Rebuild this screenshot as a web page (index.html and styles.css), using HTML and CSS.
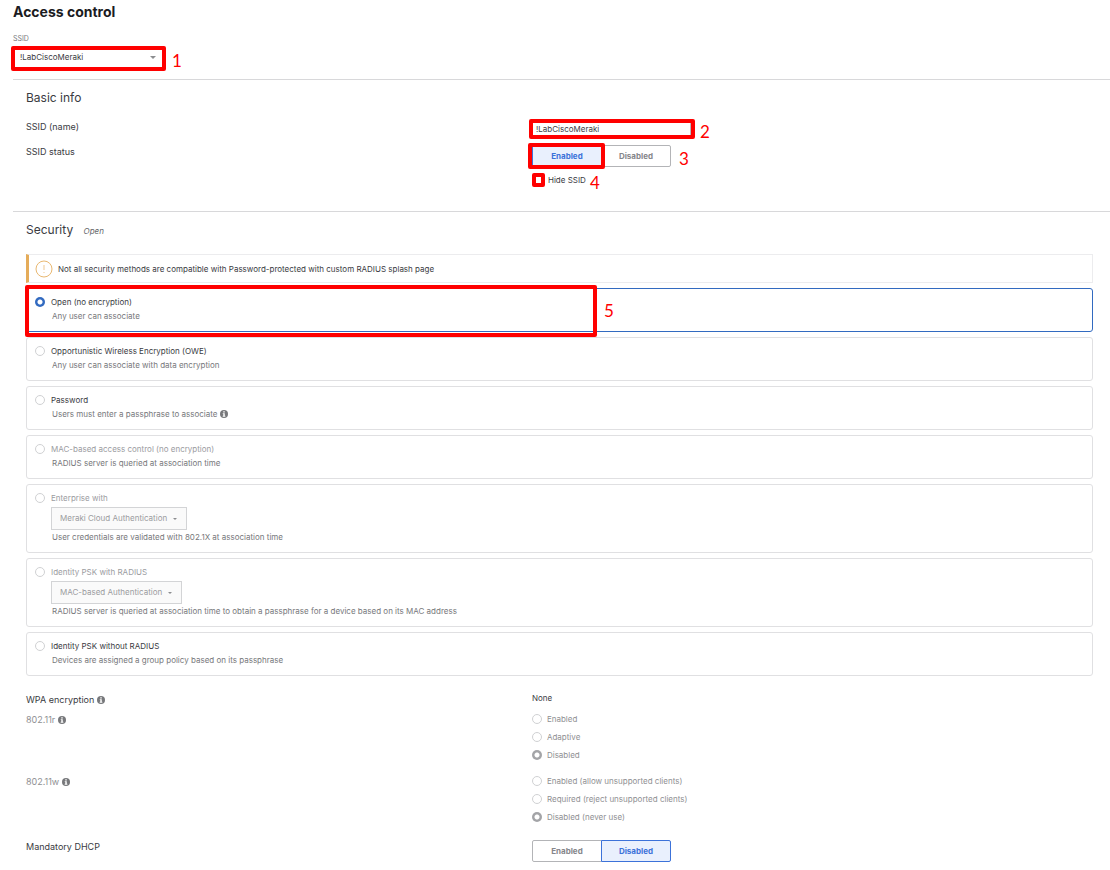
FILE: index.html
```html
<!DOCTYPE html>
<html lang="en">
  <head>
    <title>Access control</title>
    <meta charset="utf-8">
    <link rel="stylesheet" href="styles.css">
  </head>
  <body>
  <svg width="0" height="0" class="defs">
    <symbol id="info" viewBox="0 0 16 16">
      <circle cx="8" cy="8" r="8" fill="#77787b"/>
      <path d="M6.5 2.6h3v2.4h-3zM5.5 6.4h4v5h1.2v1.9H5.4v-1.9h1.2V8.2H5.5z" fill="#fff"/>
    </symbol>
  </svg>

  <header>
    <h1>Access control</h1>
    <label class="caption" for="ssid">SSID</label>
    <div class="ssid-picker">
      <select id="ssid"><option>!LabCiscoMeraki</option></select>
      <span class="mark mark-ssid"></span><span class="step step-ssid">1</span>
    </div>
  </header>

  <section>
    <h2>Basic info</h2>
    <div class="row row-name">
      <label for="name">SSID (name)</label>
      <div class="field">
        <input type="text" id="name" class="text" value="!LabCiscoMeraki">
        <span class="mark mark-name"></span><span class="step step-name">2</span>
      </div>
    </div>
    <div class="row row-status">
      <span>SSID status</span>
      <div>
        <div class="field toggle">
          <button type="button" class="on">Enabled</button><button type="button">Disabled</button>
          <span class="mark mark-status"></span><span class="step step-status">3</span>
        </div>
        <div class="field hide">
          <input type="checkbox" id="hide"><label for="hide">Hide SSID</label>
          <span class="mark mark-hide"></span><span class="step step-hide">4</span>
        </div>
      </div>
    </div>
  </section>

  <section>
    <h2>Security <em>Open</em></h2>
    <div class="alert">
      <svg width="18" height="18" viewBox="0 0 18 18"><circle cx="9" cy="9" r="8" fill="none" stroke="#e9b871"/><path d="M9 5v5M9 12v1" stroke="#efc994"/></svg>
      Not all security methods are compatible with Password-protected with custom RADIUS splash page
    </div>

    <div class="options">
      <div class="option selected">
        <input type="radio" name="security" id="open" checked>
        <div>
          <label for="open">Open (no encryption)</label>
          <p>Any user can associate</p>
        </div>
        <span class="mark mark-open"></span><span class="step step-open">5</span>
      </div>
      <div class="option">
        <input type="radio" name="security" id="owe">
        <div>
          <label for="owe">Opportunistic Wireless Encryption (OWE)</label>
          <p>Any user can associate with data encryption</p>
        </div>
      </div>
      <div class="option">
        <input type="radio" name="security" id="psk">
        <div>
          <label for="psk">Password</label>
          <p>Users must enter a passphrase to associate <svg class="info"><use href="#info"/></svg></p>
        </div>
      </div>
      <div class="option disabled">
        <input type="radio" name="security" id="mac" disabled>
        <div>
          <label for="mac">MAC-based access control (no encryption)</label>
          <p>RADIUS server is queried at association time</p>
        </div>
      </div>
      <div class="option disabled">
        <input type="radio" name="security" id="enterprise" disabled>
        <div>
          <label for="enterprise">Enterprise with</label>
          <div class="dropdown"><select aria-label="Enterprise with" disabled><option>Meraki Cloud Authentication</option></select></div>
          <p>User credentials are validated with 802.1X at association time</p>
        </div>
      </div>
      <div class="option disabled">
        <input type="radio" name="security" id="ipsk" disabled>
        <div>
          <label for="ipsk">Identity PSK with RADIUS</label>
          <div class="dropdown"><select aria-label="Identity PSK with RADIUS" disabled><option>MAC-based Authentication</option></select></div>
          <p>RADIUS server is queried at association time to obtain a passphrase for a device based on its MAC address</p>
        </div>
      </div>
      <div class="option">
        <input type="radio" name="security" id="ipsk-local">
        <div>
          <label for="ipsk-local">Identity PSK without RADIUS</label>
          <p>Devices are assigned a group policy based on its passphrase</p>
        </div>
      </div>
    </div>

    <div class="row row-wpa">
      <span>WPA encryption <svg class="info"><use href="#info"/></svg></span>
      <span class="value">None</span>
    </div>
    <div class="row row-radios">
      <span class="muted">802.11r <svg class="info"><use href="#info"/></svg></span>
      <div class="radios">
        <label><input type="radio" name="r" disabled>Enabled</label>
        <label><input type="radio" name="r" disabled>Adaptive</label>
        <label><input type="radio" name="r" disabled checked>Disabled</label>
      </div>
    </div>
    <div class="row row-radios">
      <span class="muted">802.11w <svg class="info"><use href="#info"/></svg></span>
      <div class="radios">
        <label><input type="radio" name="w" disabled>Enabled (allow unsupported clients)</label>
        <label><input type="radio" name="w" disabled>Required (reject unsupported clients)</label>
        <label><input type="radio" name="w" disabled checked>Disabled (never use)</label>
      </div>
    </div>
    <div class="row row-dhcp">
      <span>Mandatory DHCP</span>
      <div class="toggle">
        <button type="button">Enabled</button><button type="button" class="on">Disabled</button>
      </div>
    </div>
  </section>
  </body>
</html>
```
FILE: styles.css
```css
* {
  box-sizing: border-box;
}
body {
  margin: 0;
  padding: 0 0 0 13px;
  background: #fff;
  color: #3a3b3f;
  font: 9px/14px Inter, sans-serif;
}
h1, h2, p {
  margin: 0;
}
.defs {
  position: absolute;
}
input, select, button {
  font: inherit;
  margin: 0;
  color: inherit;
}

header {
  padding-top: 2px;
}
h1 {
  font-size: 14px;
  line-height: 20px;
  font-weight: 700;
  color: #1b1c1f;
}
.caption {
  display: block;
  margin-top: 10px;
  font-size: 7px;
  color: #77787b;
}

/* ssid drop-down */
.ssid-picker {
  position: relative;
  width: 151px;
  margin-bottom: 10px;
}
.ssid-picker select {
  display: block;
  width: 100%;
  height: 23px;
  padding: 0 7px 1px;
  border: 0;
  background: #fff;
  appearance: none;
  font-size: 8px;
}
.ssid-picker::after {
  content: "";
  position: absolute;
  right: 8px;
  top: 10px;
  border: 3px solid transparent;
  border-top-color: #8c8d90;
  border-bottom: 0;
}

section {
  padding: 8px 17px 0 13px;
  border-top: 1px solid #d8d8da;
}
h2 {
  font-size: 12px;
  line-height: 20px;
  font-weight: 400;
}
h2 em {
  margin-left: 7px;
  font-size: 8px;
  color: #66676b;
}

.row {
  display: grid;
  grid-template-columns: 9fr 10fr;
  column-gap: 1px;
}
.row-name {
  margin-top: 12px;
}
.row-status {
  margin-top: 9px;
  padding-bottom: 24px;
}
.field {
  position: relative;
  width: max-content;
}
.text {
  display: block;
  width: 159px;
  height: 14px;
  margin-top: 2px;
  padding: 0 3px;
  border: 1px solid #b9babd;
  font-size: 8px;
}
.toggle {
  display: flex;
}
.toggle button {
  height: 22px;
  width: 70px;
  padding: 0;
  border: 1px solid #b3b4b7;
  border-radius: 2px 0 0 2px;
  background: #fff;
  font-size: 8px;
  font-weight: 700;
  color: #85868a;
}
.toggle button + button {
  margin-left: -1px;
  border-radius: 0 2px 2px 0;
}
.toggle .on {
  position: relative;
  border-color: #3c72d9;
  background: #e9f0fd;
  color: #3c72d9;
}
.hide {
  display: flex;
  align-items: center;
  gap: 5px;
  margin-top: 6px;
  font-size: 8px;
}
.hide input {
  width: 11px;
  height: 11px;
}

/* security */
.alert {
  display: flex;
  align-items: center;
  gap: 5px;
  height: 29px;
  margin: 13px 0 5px;
  padding-left: 6px;
  border: 1px solid #ececee;
  border-left: 3px solid #e5ac5a;
  font-size: 8px;
}
.options {
  display: grid;
  gap: 5px;
  font-size: 8px;
}
.option {
  position: relative;
  display: flex;
  gap: 6px;
  padding: 6px 8px 8px;
  border: 1px solid #e0e0e2;
  border-radius: 3px;
}
.option label {
  display: block;
}
.option p {
  padding-left: 1px;
  color: #77787b;
}
.selected {
  border-color: #326ac0;
}
.disabled label {
  color: #9b9c9f;
}
input[type=radio] {
  appearance: none;
  flex: none;
  width: 10px;
  height: 10px;
  margin: 2px 0;
  border: 1px solid #d0d1d3;
  border-radius: 50%;
  background: #fff;
}
input[type=radio]:checked {
  border: 0;
  background: radial-gradient(circle, #fff 2px, #326ac0 3px);
}
input[type=radio]:checked:disabled {
  background: radial-gradient(circle, #fff 2px, #a3a4a7 3px);
}
.dropdown {
  position: relative;
  width: max-content;
  margin-top: 2px;
}
.dropdown select {
  display: block;
  height: 23px;
  padding: 0 18px 1px 8px;
  border: 1px solid #d3d4d6;
  background: #fafafa;
  appearance: none;
  color: #9b9c9f;
  opacity: 1;
}
.dropdown::after {
  content: "";
  position: absolute;
  right: 10px;
  top: 11px;
  border: 2px solid transparent;
  border-top-color: #8c8d90;
  border-bottom: 0;
}
.info {
  width: 8px;
  height: 8px;
  vertical-align: -1px;
}

.row-wpa {
  margin-top: 17px;
}
.value {
  margin-top: -2px;
  font-size: 8px;
}
.muted {
  color: #8f9093;
}
.row-radios {
  margin-top: 6px;
}
.radios {
  display: grid;
  gap: 4px;
  margin-top: -1px;
  padding-bottom: 7px;
  font-size: 8px;
  color: #8f9093;
}
.radios label {
  display: flex;
  align-items: center;
  gap: 5px;
}
.row-dhcp {
  margin-top: 9px;
}

/* numbered walkthrough marks */
.mark {
  position: absolute;
  z-index: 1;
  border: 4px solid #f00;
  border-radius: 2px;
  pointer-events: none;
}
.step {
  position: absolute;
  z-index: 1;
  font: 17px/20px Lato, sans-serif;
  color: #f00;
}
.mark-ssid {
  inset: 0 -2px -2px;
}
.step-ssid {
  left: 159px;
  top: 5px;
}
.mark-name {
  inset: -1px -4px -3px -3px;
}
.step-name {
  left: 168px;
  top: 2px;
}
.mark-status {
  inset: -2px 66px -2px -4px;
}
.step-status {
  left: 147px;
  top: 4px;
}
.mark-hide {
  left: 0;
  top: 0;
  width: 13px;
  height: 14px;
}
.step-hide {
  left: 58px;
  top: 0;
}
.mark-open {
  left: -2px;
  top: -4px;
  width: 572px;
  height: 52px;
}
.step-open {
  left: 577px;
  top: 12px;
}
```
